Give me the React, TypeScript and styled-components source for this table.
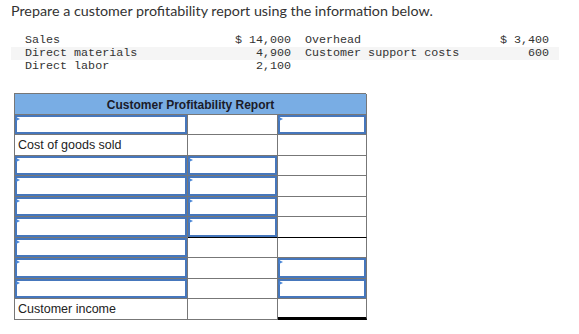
import React from 'react';
import styled, { createGlobalStyle } from 'styled-components';

const GlobalStyle = createGlobalStyle`
  html, body {
    margin: 0;
    padding: 0;
    background: #ffffff;
  }
`;

type CellKind = 'plain' | 'input';

interface RowSpec {
  label?: string;
  cells: [CellKind, CellKind, CellKind];
  bottom?: [boolean, boolean, boolean];
  double?: boolean;
}

const rows: RowSpec[] = [
  { cells: ['input', 'plain', 'input'] },
  { label: 'Cost of goods sold', cells: ['plain', 'plain', 'plain'] },
  { cells: ['input', 'input', 'plain'] },
  { cells: ['input', 'input', 'plain'] },
  { cells: ['input', 'input', 'plain'] },
  { cells: ['input', 'input', 'plain'], bottom: [false, true, true] },
  { cells: ['input', 'plain', 'plain'] },
  { cells: ['input', 'plain', 'input'] },
  { cells: ['input', 'plain', 'input'] },
  { label: 'Customer income', cells: ['plain', 'plain', 'plain'], double: true },
];

export default function App() {
  return (
    <Page>
      <GlobalStyle />
      <Prompt>Prepare a customer profitability report using the information below.</Prompt>
      <DataGrid>
        <DataRow>
          <DataLabel>Sales</DataLabel>
          <DataAmount>$ 14,000</DataAmount>
          <DataLabel2>Overhead</DataLabel2>
          <DataAmount2>$ 3,400</DataAmount2>
        </DataRow>
        <DataRow $shaded>
          <DataLabel>Direct materials</DataLabel>
          <DataAmount>4,900</DataAmount>
          <DataLabel2>Customer support costs</DataLabel2>
          <DataAmount2>600</DataAmount2>
        </DataRow>
        <DataRow>
          <DataLabel>Direct labor</DataLabel>
          <DataAmount>2,100</DataAmount>
          <DataLabel2 />
          <DataAmount2 />
        </DataRow>
      </DataGrid>

      <Report>
        <HeaderCell>Customer Profitability Report</HeaderCell>
        {rows.map((row, r) =>
          row.cells.map((kind, c) => (
            <Cell
              key={`${r}-${c}`}
              $blackBottom={row.bottom ? row.bottom[c] : false}
              $double={row.double === true && c === 2}
            >
              {c === 0 && row.label ? <CellText>{row.label}</CellText> : null}
              {kind === 'input' ? (
                <InputBox>
                  <Marker />
                </InputBox>
              ) : null}
            </Cell>
          ))
        )}
      </Report>
    </Page>
  );
}

const Page = styled.div`
  padding: 2px 0 0 11px;
  width: 568px;
`;

const Prompt = styled.div`
  font-family: Lato, 'Open Sans', sans-serif;
  font-size: 14.3px;
  color: #333333;
  line-height: 18px;
  margin-bottom: 14px;
`;

const DataGrid = styled.div`
  display: flex;
  flex-direction: column;
  width: 548px;
`;

const DataRow = styled.div<{ $shaded?: boolean }>`
  display: grid;
  grid-template-columns: 14px 162px 104px 14px 147px 97px;
  height: 13px;
  background: ${(p) => (p.$shaded ? '#f5f5f5' : 'transparent')};
  font-family: 'Liberation Mono', 'Courier New', monospace;
  font-size: 11.7px;
  line-height: 13px;
  color: #333333;
  white-space: pre;
  &::before {
    content: '';
  }
`;

const DataLabel = styled.span``;

const DataAmount = styled.span`
  text-align: right;
`;

const DataLabel2 = styled.span`
  grid-column: 5;
`;

const DataAmount2 = styled.span`
  text-align: right;
`;

const Report = styled.div`
  margin: 20px 0 0 3px;
  display: grid;
  grid-template-columns: 173px 90px 89px;
  grid-auto-rows: 20.5px;
  width: 352px;
  border-left: 1px solid #777777;
  border-top: 1px solid #777777;
  box-sizing: border-box;
`;

const HeaderCell = styled.div`
  grid-column: 1 / span 3;
  background: #79ade4;
  border-right: 1px solid #777777;
  border-bottom: 1px solid #777777;
  font-family: 'Liberation Sans', Arial, sans-serif;
  font-weight: bold;
  font-size: 12px;
  color: #1b1b2a;
  display: flex;
  align-items: center;
  justify-content: center;
  padding-top: 2px;
  box-sizing: border-box;
`;

const Cell = styled.div<{ $blackBottom: boolean; $double: boolean }>`
  position: relative;
  border-right: 1px solid #777777;
  border-bottom: ${(p) =>
    p.$double ? '3px solid #000000' : p.$blackBottom ? '1px solid #000000' : '1px solid #777777'};
  box-sizing: border-box;
  display: flex;
  align-items: center;
`;

const CellText = styled.span`
  font-family: 'Liberation Sans', Arial, sans-serif;
  font-size: 12.5px;
  color: #222222;
  padding-left: 3px;
  padding-top: 1px;
`;

const InputBox = styled.div`
  position: absolute;
  left: 0;
  top: 0;
  right: 0;
  bottom: 0;
  border: 2px solid #4677bc;
`;

const Marker = styled.div`
  position: absolute;
  left: -1px;
  top: 0;
  width: 0;
  height: 0;
  border-top: 2.5px solid transparent;
  border-bottom: 2.5px solid transparent;
  border-left: 4px solid #4a86d6;
`;
